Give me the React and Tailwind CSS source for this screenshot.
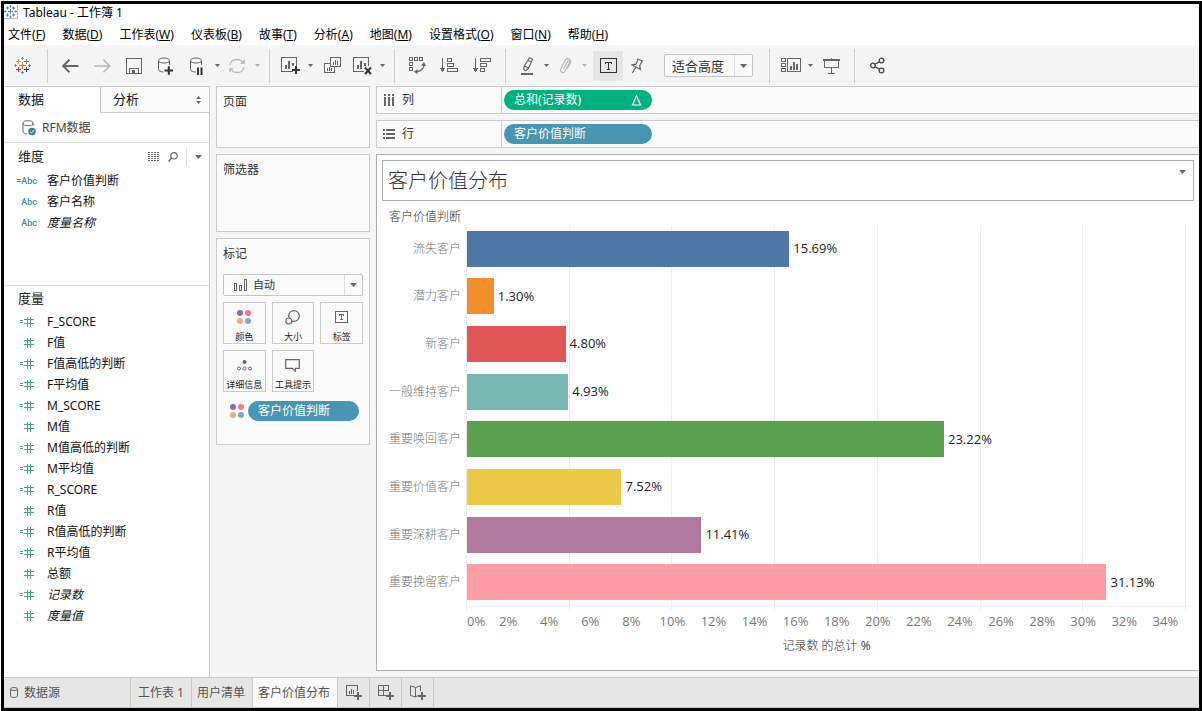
import React from "react";

const UI = "font-['Noto_Sans','Noto_Sans_CJK_SC',sans-serif]";

const bars = [
  { name: "流失客户", value: 15.69, color: "#4e79a7" },
  { name: "潜力客户", value: 1.3, color: "#f28e2b" },
  { name: "新客户", value: 4.8, color: "#e15759" },
  { name: "一般维持客户", value: 4.93, color: "#76b7b2" },
  { name: "重要唤回客户", value: 23.22, color: "#59a14f" },
  { name: "重要价值客户", value: 7.52, color: "#edc948" },
  { name: "重要深耕客户", value: 11.41, color: "#b07aa1" },
  { name: "重要挽留客户", value: 31.13, color: "#ff9da7" },
];
const AXIS_MAX = 35;
const ticks = [2, 4, 6, 8, 10, 12, 14, 16, 18, 20, 22, 24, 26, 28, 30, 32, 34];

const menus = [
  ["文件", "F"],
  ["数据", "D"],
  ["工作表", "W"],
  ["仪表板", "B"],
  ["故事", "T"],
  ["分析", "A"],
  ["地图", "M"],
  ["设置格式", "O"],
  ["窗口", "N"],
  ["帮助", "H"],
];

const dimensions = [
  { name: "客户价值判断", calc: true },
  { name: "客户名称" },
  { name: "度量名称", italic: true },
];

const measures = [
  { name: "F_SCORE", calc: true },
  { name: "F值" },
  { name: "F值高低的判断", calc: true },
  { name: "F平均值", calc: true },
  { name: "M_SCORE", calc: true },
  { name: "M值" },
  { name: "M值高低的判断", calc: true },
  { name: "M平均值", calc: true },
  { name: "R_SCORE", calc: true },
  { name: "R值" },
  { name: "R值高低的判断", calc: true },
  { name: "R平均值", calc: true },
  { name: "总额" },
  { name: "记录数", calc: true, italic: true },
  { name: "度量值", italic: true },
];

function Icon({ w, h, children, className = "", crisp = false }) {
  return (
    <svg
      width={w}
      height={h}
      viewBox={`0 0 ${w} ${h}`}
      fill="none"
      stroke="#666"
      className={`shrink-0 ${className}`}
      shapeRendering={crisp ? "crispEdges" : "auto"}
      aria-hidden="true"
    >
      {children}
    </svg>
  );
}

function Caret({ wide = false, color = "#666" }) {
  return wide ? (
    <Icon w={7} h={4}>
      <path d="M0 0h7L3.5 4z" fill={color} stroke="none" />
    </Icon>
  ) : (
    <Icon w={5} h={3}>
      <path d="M0 0h5L2.5 3z" fill={color} stroke="none" />
    </Icon>
  );
}

function Logo() {
  return (
    <Icon w={17} h={17} crisp>
      <path d="M8.5 5v7M5 8.5h7" stroke="#e8762d" />
      <path d="M4.5 2v5M2 4.5h5" stroke="#eb9c5c" />
      <path d="M12.5 2v5M10 4.5h5" stroke="#5b879b" />
      <path d="M4.5 10v5M2 12.5h5" stroke="#c72035" />
      <path d="M12.5 10v5M10 12.5h5" stroke="#1f457e" />
      <path d="M8.5 0v3M7 1.5h3" stroke="#7099a6" />
      <path d="M8.5 14v3M7 15.5h3" stroke="#7c7fb0" />
      <path d="M1.5 7v3M0 8.5h3" stroke="#7099a6" />
      <path d="M15.5 7v3M14 8.5h3" stroke="#59879b" />
    </Icon>
  );
}

function WindowIcon() {
  return (
    <Icon w={13} h={13}>
      <g stroke="#3f86b0">
        <path d="M6.5 4v5M4 6.5h5M3.500 1.500v3M2 3h3M9.500 1.500v3M8 3h3M3.500 8.500v3M2 10h3M9.500 8.500v3M8 10h3" />
        <path d="M6.500 0v2.500M6.500 10.500V13M0 6.500h2.500M10.500 6.500H13M5.500 1.200h2M5.500 11.800h2M1.200 5.500v2M11.800 5.500v2" />
      </g>
    </Icon>
  );
}

function Cylinder() {
  return (
    <>
      <ellipse cx="6" cy="3.5" rx="5.5" ry="2.5" />
      <path d="M0.5 3.5v9c0 1.4 2 2.3 5 2.5M11.5 3.5v4.5" />
    </>
  );
}

function Dots() {
  return (
    <Icon w={14} h={14}>
      <g stroke="none">
        <circle cx="3" cy="3" r="3" fill="#8a7099" />
        <circle cx="11" cy="3" r="3" fill="#fb7482" />
        <circle cx="3" cy="11" r="3" fill="#f2a77c" />
        <circle cx="11" cy="11" r="3" fill="#85a6cc" />
      </g>
    </Icon>
  );
}

function Tool({ label, width = "w-8", className = "", children }) {
  return (
    <button
      type="button"
      aria-label={label}
      className={`flex h-[30px] shrink-0 items-center justify-center ${width} ${className}`}
    >
      {children}
    </button>
  );
}

function Sep() {
  return <div className="mx-1.5 h-[34px] w-px shrink-0 bg-[#d0d0d0]" />;
}

function Toolbar() {
  return (
    <div className="flex h-[41px] items-center bg-[#f5f5f5]">
      <Tool label="Tableau" width="w-[37px]">
        <Logo />
      </Tool>
      <Sep />
      <Tool label="撤消">
        <Icon w={17} h={14}>
          <path d="M16.5 7H1.5M7.5 0.8L1.2 7l6.3 6.2" strokeWidth="1.9" />
        </Icon>
      </Tool>
      <Tool label="重做">
        <Icon w={17} h={14}>
          <path d="M0.5 7h15M9.5 0.8L15.8 7l-6.3 6.2" strokeWidth="1.5" stroke="#b4b4b4" />
        </Icon>
      </Tool>
      <Tool label="保存">
        <Icon w={16} h={16} crisp>
          <path d="M0.5 0.5h15v15h-15zM3.5 15v-5h9v5" />
          <path d="M6 12h3v4H6z" fill="#666" stroke="none" />
        </Icon>
      </Tool>
      <Tool label="新建数据源">
        <Icon w={16} h={18}>
          <Cylinder />
          <path d="M6.500 13.5h8.5M10.800 9.3v8.5" stroke="#333" strokeWidth="2" />
        </Icon>
      </Tool>
      <Tool label="暂停自动更新" width="w-[29px]">
        <Icon w={14} h={18}>
          <Cylinder />
          <path d="M8 10.5v7.5M11.5 10.5v7.5" stroke="#333" strokeWidth="2" />
        </Icon>
      </Tool>
      <Tool label="更新选项" width="w-3">
        <Caret />
      </Tool>
      <Tool label="运行更新" width="w-7">
        <Icon w={18} h={16}>
          <g stroke="#bbb" strokeWidth="1.3">
            <path d="M2 7C2.6 3.4 5.5 1.5 8.8 1.5c3.2 0 5.4 1.7 6.4 4.3M16 9c-.6 3.6-3.5 5.5-6.8 5.5-3.2 0-5.4-1.7-6.4-4.3" />
            <path d="M12 5.8h4.8l.2-4.3zM6 10.2H1.2L1 14.5z" fill="#bbb" stroke="none" />
          </g>
        </Icon>
      </Tool>
      <Tool label="运行选项" width="w-3">
        <Caret color="#b4b4b4" />
      </Tool>
      <Sep />
      <Tool label="新建工作表" width="w-7">
        <Icon w={19} h={18} crisp>
          <path d="M12 14.5H0.5v-14h15v8" />
          <path d="M4.5 12V8M8 12V4M11.5 9V6" strokeWidth="2" />
          <path d="M11 13h8M15 9v8" stroke="#333" strokeWidth="2" />
        </Icon>
      </Tool>
      <Tool label="工作表选项" width="w-3">
        <Caret />
      </Tool>
      <Tool label="复制工作表">
        <Icon w={17} h={17} crisp>
          <path d="M6.5 0.5h10v9h-10zM6.5 6.5h-6v9h10V10" />
          <path d="M9.5 7.5V5M11.5 7.5V3M13.5 7.5V4M3.5 13.5V11M5.5 13.5V10M7.5 13.5V11" />
        </Icon>
      </Tool>
      <Tool label="清除工作表" width="w-7">
        <Icon w={19} h={18}>
          <g shapeRendering="crispEdges">
            <path d="M11 14.5H0.5v-14h15v8" />
            <path d="M4.5 12V8M8 12V4M11.5 9V6" strokeWidth="2" />
          </g>
          <path d="M12 10.5l6 6.5M18 10.5L12 17" stroke="#333" strokeWidth="2" />
        </Icon>
      </Tool>
      <Tool label="清除选项" width="w-3">
        <Caret />
      </Tool>
      <Sep />
      <Tool label="交换行和列">
        <Icon w={17} h={17}>
          <g shapeRendering="crispEdges">
            <path d="M0.5 0.5h3v3h-3zM5.5 0.5h3v3h-3zM10.5 0.5h3v3h-3zM0.5 5.5h3v3h-3zM0.5 10.5h3v3h-3z" />
          </g>
          <path d="M15 7c.3 4-2.6 7.5-8 7.8" strokeWidth="1.3" />
          <path d="M12 8.5L15 5l2 4zM8.5 12L5 14.8 8.5 17z" fill="#666" stroke="none" />
        </Icon>
      </Tool>
      <Tool label="升序排序">
        <Icon w={18} h={15} crisp>
          <path d="M2.5 0v11" />
          <path d="M0 10h5L2.5 14.5z" fill="#666" stroke="none" />
          <path d="M7.5 0.5h4v3h-4zM7.5 5.5h6v3h-6zM7.5 10.5h10v3h-10z" />
        </Icon>
      </Tool>
      <Tool label="降序排序" width="w-[34px]">
        <Icon w={18} h={15} crisp>
          <path d="M2.5 0v11" />
          <path d="M0 10h5L2.5 14.5z" fill="#666" stroke="none" />
          <path d="M7.5 0.5h10v3h-10zM7.5 5.5h6v3h-6zM7.5 10.5h4v3h-4z" />
        </Icon>
      </Tool>
      <Sep />
      <Tool label="突出显示" width="w-[30px]">
        <Icon w={13} h={18}>
          <path
            d="M8.5 0.8l3 1.5-4 9-2.8 2.4-2-1.2.6-3.5zM3.5 9l4 2.2M7 3.5l3.5 1.8"
            strokeWidth="1.2"
          />
          <path d="M0 17h12" strokeWidth="2" />
        </Icon>
      </Tool>
      <Tool label="突出显示选项" width="w-2">
        <Caret />
      </Tool>
      <Tool label="组成员" width="w-[30px]">
        <Icon w={13} h={16}>
          <path
            d="M4.5 11l4-7.2c.9-1.5 2.7-.7 2 .9L6 13.3c-1.3 2.3-5 1.2-4.5-1.7.1-.8 4.5-9 5.3-9.9 1.9-2 5.7-.5 4.8 2.8L8.5 10.5"
            stroke="#b8b8b8"
            strokeWidth="1.2"
          />
        </Icon>
      </Tool>
      <Tool label="组选项" width="w-2">
        <Caret color="#b4b4b4" />
      </Tool>
      <Tool label="显示标记标签" width="w-[30px]" className="ml-[5px] bg-[#e6e6e6]">
        <Icon w={17} h={15} crisp>
          <path d="M0.5 0.5h16v14h-16z" stroke="#333" />
          <path d="M5.5 6V4.5h6V6M8.5 4.5v7M7 11.5h3" stroke="#333" />
        </Icon>
      </Tool>
      <Tool label="固定轴" width="w-7">
        <Icon w={13} h={16}>
          <path
            d="M6 0.8l6 2.5M7 1.5L5 6.2 1 7l8.5 4.3-.8-3.5L11 3.2M4.8 9.3L1.2 15"
            strokeWidth="1.2"
          />
        </Icon>
      </Tool>
      <div className="relative mr-2.5 ml-[13px] h-[23px] w-[89px] shrink-0">
        <select
          aria-label="适合"
          className="h-full w-full appearance-none rounded-xs border border-[#c4c4c4] bg-[#fafafa] pl-[7px] text-[13px] leading-5 text-[#333]"
        >
          <option>适合高度</option>
          <option>标准</option>
          <option>适合宽度</option>
          <option>整个视图</option>
        </select>
        <span className="pointer-events-none absolute inset-y-px right-px flex w-[18px] items-center justify-center border-l border-[#ddd]">
          <Caret wide />
        </span>
      </div>
      <Sep />
      <Tool label="显示/隐藏卡" width="w-[30px]">
        <Icon w={20} h={15} crisp>
          <path d="M0.5 0.5h4v3h-4zM0.5 5.5h4v3h-4zM0.5 10.5h4v3h-4zM6.5 0.5h13v13h-13z" />
          <path d="M10 12V8M13 12V4M16 12V6" strokeWidth="2" />
        </Icon>
      </Tool>
      <Tool label="卡选项" width="w-2">
        <Caret />
      </Tool>
      <Tool label="演示模式" width="w-[34px]">
        <Icon w={17} h={16} crisp>
          <path d="M0 2h17" strokeWidth="2" />
          <path d="M1.5 2v7.5h14V2M8.5 10v5M5 15.5h7M8.5 0v1" />
        </Icon>
      </Tool>
      <Sep />
      <Tool label="共享">
        <Icon w={15} h={17}>
          <g strokeWidth="1.3" stroke="#444">
            <circle cx="3" cy="8.500" r="2.300" />
            <circle cx="11.5" cy="3.500" r="2.300" />
            <circle cx="11.5" cy="13.500" r="2.300" />
            <path d="M5 7.300l4.500-2.600M5 9.700l4.500 2.600" />
          </g>
        </Icon>
      </Tool>
    </div>
  );
}

function Field({ icon, name, italic }) {
  return (
    <li className="h-[21px]">
      <button type="button" className="flex h-full w-full items-center gap-2.5 pl-3.5 text-left">
        <span className="flex w-[19px] justify-end">{icon}</span>
        <span className={italic ? "italic" : ""}>{name}</span>
      </button>
    </li>
  );
}

function HashIcon({ calc }) {
  return (
    <Icon w={14} h={11} crisp className="mr-[3px]">
      <path d="M4 3.5h10M4 7.5h10M7.5 0.5v10M10.5 0.5v10" stroke="#46a17f" />
      {calc && <path d="M0 4.5h3M0 6.5h3" stroke="#46a17f" />}
    </Icon>
  );
}

function Sidebar() {
  return (
    <aside className="flex w-[206px] shrink-0 flex-col border-r border-[#ccc] bg-white">
      <div className="flex h-[27px] border-t border-[#ccc] text-[13px] text-[#111]">
        <button type="button" className="w-24 pl-3.5 text-left">
          数据
        </button>
        <button
          type="button"
          className="flex flex-1 items-center justify-between border-b border-l border-[#ccc] bg-[#fafafa] pr-2 pl-3"
        >
          分析
          <Icon w={5} h={8}>
            <path d="M0 3h5L2.5 0zM0 5h5L2.5 8z" fill="#666" stroke="none" />
          </Icon>
        </button>
      </div>
      <button
        type="button"
        className="flex h-[30px] items-center gap-1.5 border-b border-[#ddd] pl-[18px] text-[#444]"
      >
        <Icon w={14} h={16}>
          <ellipse cx="6" cy="3.2" rx="5" ry="2.5" />
          <path d="M1 3.2v8.3c0 1.4 1.5 2.3 4 2.5M11 3.2V6" />
          <circle cx="10" cy="11.5" r="3.800" fill="#3b83a3" stroke="none" />
          <path d="M8.200 11.600l1.300 1.300 2.300-2.600" stroke="#fff" />
        </Icon>
        RFM数据
      </button>
      <section className="h-[143px] border-b border-[#ddd]">
        <div className="flex h-[27px] items-center pr-[7px] pl-3.5">
          <h2 className="flex-1 text-[13px] text-[#222]">维度</h2>
          <button type="button" aria-label="查看数据">
            <Icon w={12} h={9} crisp>
              <path
                d="M0 0.5h12M0 2.5h12M0 4.5h12M0 6.5h12M0 8.5h12"
                strokeDasharray="2 1"
              />
            </Icon>
          </button>
          <button type="button" aria-label="查找字段" className="ml-2">
            <Icon w={10} h={10}>
              <circle cx="6" cy="3.8" r="3.2" strokeWidth="1.2" />
              <path d="M3.5 6L0.5 9.5" strokeWidth="1.5" />
            </Icon>
          </button>
          <span className="mx-2 h-[18px] w-px bg-[#ddd]" />
          <button type="button" aria-label="维度菜单">
            <Caret wide />
          </button>
        </div>
        <ul className="text-[#111]">
          {dimensions.map((d) => (
            <Field
              key={d.name}
              name={d.name}
              italic={d.italic}
              icon={
                <span className="font-['Roboto',sans-serif] text-[9px] font-medium text-[#4585a0]">
                  {d.calc ? "=Abc" : "Abc"}
                </span>
              }
            />
          ))}
        </ul>
      </section>
      <section>
        <h2 className="h-[25px] pl-3.5 text-[13px] leading-6 text-[#222]">度量</h2>
        <ul className="text-[#111]">
          {measures.map((m) => (
            <Field key={m.name} name={m.name} italic={m.italic} icon={<HashIcon calc={m.calc} />} />
          ))}
        </ul>
      </section>
    </aside>
  );
}

function MarkButton({ label, children }) {
  return (
    <button
      type="button"
      className="flex h-[42px] flex-col items-center border border-[#ccc] bg-[#fafafa] text-[9px] leading-3 whitespace-nowrap text-[#222]"
    >
      <span className="flex h-7 items-center justify-center">{children}</span>
      {label}
    </button>
  );
}

function Pill({ children, className }) {
  return (
    <button
      type="button"
      className={`flex h-5 items-center justify-between rounded-full px-2.5 text-white ${className}`}
    >
      {children}
    </button>
  );
}

function Cards() {
  const card = "border border-[#ccc] bg-[#fafafa] px-1.5 pt-[5px]";
  return (
    <div className="flex w-[154px] shrink-0 flex-col gap-1.5 text-[#333]">
      <section className={`${card} h-[62px]`}>
        <h2 className="leading-5">页面</h2>
      </section>
      <section className={`${card} h-[78px]`}>
        <h2 className="leading-5">筛选器</h2>
      </section>
      <section className={`${card} h-[207px]`}>
        <h2 className="leading-5">标记</h2>
        <div className="relative mt-2.5 h-[22px]">
          <select
            aria-label="标记类型"
            className="h-full w-full appearance-none rounded-xs border border-[#c4c4c4] bg-[#fafafa] pl-[29px] text-[11px] text-[#333]"
          >
            <option>自动</option>
            <option>条形图</option>
            <option>线</option>
          </select>
          <span className="pointer-events-none absolute inset-y-0 left-[11px] flex items-center">
            <Icon w={13} h={12} crisp>
              <path d="M0.5 4.5h2v7h-2zM5.5 6.5h2v5h-2zM10.5 0.5h2v11h-2z" />
            </Icon>
          </span>
          <span className="pointer-events-none absolute inset-y-px right-px flex w-[18px] items-center justify-center border-l border-[#ddd]">
            <Caret wide />
          </span>
        </div>
        <div className="mt-1.5 grid grid-cols-3 gap-1.5">
          <MarkButton label="颜色">
            <Dots />
          </MarkButton>
          <MarkButton label="大小">
            <Icon w={16} h={15}>
              <circle cx="9" cy="6" r="5.4" strokeWidth="1.2" />
              <circle cx="3.8" cy="11" r="3" strokeWidth="1.2" fill="#fafafa" />
            </Icon>
          </MarkButton>
          <MarkButton label="标签">
            <Icon w={13} h={12} crisp>
              <path d="M0.5 0.5h12v11h-12zM4.5 5V3.5h4V5M6.5 3.5v5M5 8.5h3" />
            </Icon>
          </MarkButton>
          <MarkButton label="详细信息">
            <Icon w={15} h={11}>
              <circle cx="7.5" cy="2" r="2" fill="#666" stroke="none" />
              <circle cx="2" cy="8.5" r="1.5" />
              <circle cx="7.5" cy="8.5" r="1.5" />
              <circle cx="13" cy="8.5" r="1.5" />
            </Icon>
          </MarkButton>
          <MarkButton label="工具提示">
            <Icon w={15} h={13}>
              <path d="M0.7 0.7h13.6v8.6h-4v3L7.5 9.3H0.7z" strokeWidth="1.2" />
            </Icon>
          </MarkButton>
        </div>
        <div className="mt-[9px] flex items-center gap-1 pr-1 pl-[7px]">
          <Dots />
          <Pill className="flex-1 bg-[#4996b2]">客户价值判断</Pill>
        </div>
      </section>
    </div>
  );
}

function Shelf({ icon, label, children }) {
  return (
    <div className="flex h-7 border-y border-l border-[#ccc] bg-[#fafafa]">
      <div className="flex w-[125px] shrink-0 items-center gap-[7px] border-r border-[#ccc] pl-1.5 text-[#333]">
        {icon}
        {label}
      </div>
      <div className="flex items-center pl-0.5">{children}</div>
    </div>
  );
}

function Chart() {
  return (
    <div className="flex flex-1 flex-col pt-1.5 pr-[13px] font-['Open_Sans','Noto_Sans_CJK_SC',sans-serif]">
      <h3 className="h-[18px] pl-3 leading-5 font-light text-[#333]">客户价值判断</h3>
      <div className="grid flex-1 [&>*]:col-start-1 [&>*]:row-start-1">
        <div className="flex pl-[89px]">
          <div className="grid flex-1 grid-cols-7 border-l border-[#eee]">
            {[5, 10, 15, 20, 25, 30, 35].map((v) => (
              <span key={v} className="border-r border-[#eee]" />
            ))}
          </div>
        </div>
        <div className="-mr-1 mb-[3px] ml-[89px] border-b border-[#f2f2f2]" />
        <div className="mb-1 flex flex-col">
          {bars.map((b) => (
            <div key={b.name} className="flex flex-1 items-center">
              <div className="w-[90px] shrink-0 pr-1.5 text-right font-light text-[#777]">{b.name}</div>
              <div className="flex flex-1 items-center">
                <div
                  className="h-9 shrink-0"
                  style={{ width: `${(b.value / AXIS_MAX) * 100}%`, backgroundColor: b.color }}
                />
                <span className="pl-1 text-[13px] text-[#222]">{b.value.toFixed(2)}%</span>
              </div>
            </div>
          ))}
        </div>
      </div>
      <div className="flex h-6 items-center pl-[90px] text-[13px] text-[#777]">
        <span className="min-w-0 flex-1">0%</span>
        {ticks.map((t) => (
          <span key={t} className="min-w-0 flex-[2] text-center">
            {t}%
          </span>
        ))}
      </div>
      <div className="h-9 pl-[90px] text-center leading-6 font-light text-[#333]">
        记录数 的总计 <span className="font-normal">%</span>
      </div>
    </div>
  );
}

function Plus() {
  return <path d="M8 11h8M12 7v8" strokeWidth="2" />;
}

function SheetTabs() {
  const tab = "flex shrink-0 items-center border-r border-[#c8c8c8]";
  return (
    <footer className="flex h-[31px] border-y border-[#c8c8c8] bg-[#e6e6e6] text-[#555]">
      <button type="button" className={`${tab} w-[127px] gap-1.5 pl-1.5`}>
        <Icon w={8} h={11}>
          <ellipse cx="4" cy="2" rx="3.5" ry="1.5" />
          <path d="M0.5 2v7c0 .8 1.5 1.5 3.5 1.5S7.5 9.8 7.5 9V2" />
        </Icon>
        数据源
      </button>
      <button type="button" className={`${tab} w-[61px] justify-center`}>
        工作表 1
      </button>
      <button type="button" className={`${tab} w-[61px] pl-[5px]`}>
        用户清单
      </button>
      <button type="button" className={`${tab} w-[85px] bg-[#fafafa] pl-[5px]`}>
        客户价值分布
      </button>
      <button type="button" aria-label="新建工作表" className={`${tab} w-8 justify-center`}>
        <Icon w={16} h={15} crisp>
          <path d="M8 10.5H0.5v-10h11V6M3.5 8.5V6M5.5 8.5V4M7.5 8.5V5" />
          <Plus />
        </Icon>
      </button>
      <button type="button" aria-label="新建仪表板" className={`${tab} w-8 justify-center`}>
        <Icon w={16} h={15} crisp>
          <path d="M8 10.5H0.5v-10h10V6M0.5 5.5h10M5.5 0.5v10" />
          <Plus />
        </Icon>
      </button>
      <button type="button" aria-label="新建故事" className={`${tab} w-8 justify-center`}>
        <Icon w={16} h={15}>
          <path d="M8 10.5L5.5 12 0.5 10.5V0.8L5.5 2.5l5-1.7V6M5.5 2.5V12" />
          <g shapeRendering="crispEdges">
            <Plus />
          </g>
        </Icon>
      </button>
    </footer>
  );
}

export default function App() {
  return (
    <div lang="zh-CN" className={`flex min-h-screen bg-white pt-px pl-px text-xs ${UI}`}>
      <div className="flex min-w-0 flex-1 flex-col overflow-hidden border-[3px] border-black">
        <header className="flex h-[18px] items-center gap-[5px] text-black">
          <span className="flex h-[15px] w-[14px] shrink-0 items-center justify-center self-start border-r border-b border-[#bbb]">
            <WindowIcon />
          </span>
          <span>Tableau - 工作簿 1</span>
        </header>
        <nav className="flex h-[23px] items-center gap-[17px] pt-0.5 pl-1 whitespace-nowrap text-black">
          {menus.map(([label, key]) => (
            <button type="button" key={key}>
              {label}(<span className="underline">{key}</span>)
            </button>
          ))}
        </nav>
        <Toolbar />
        <main className="flex flex-1 gap-1.5 bg-[#f5f5f5]">
          <Sidebar />
          <Cards />
          <div className="flex min-w-0 flex-1 flex-col gap-1.5">
            <Shelf
              label="列"
              icon={
                <Icon w={12} h={12} crisp>
                  <path d="M2 0v2M2 3v9M6 0v2M6 3v9M10 0v2M10 3v9" strokeWidth="2" />
                </Icon>
              }
            >
              <Pill className="w-[148px] bg-[#00b180]">
                总和(记录数)
                <Icon w={11} h={11}>
                  <path d="M5.5 1L9.5 10h-8z" stroke="#fff" strokeWidth="1.2" />
                </Icon>
              </Pill>
            </Shelf>
            <Shelf
              label="行"
              icon={
                <Icon w={12} h={10} crisp>
                  <path d="M0 1h2M3 1h9M0 5h2M3 5h9M0 9h2M3 9h9" strokeWidth="2" />
                </Icon>
              }
            >
              <Pill className="w-[148px] bg-[#4996b2]">客户价值判断</Pill>
            </Shelf>
            <section className="mb-1.5 flex flex-1 flex-col border-y border-l border-[#b0b0b0] bg-white">
              <div className="mx-[5px] mt-[5px] flex h-[41px] items-start justify-between border border-[#b0b0b0] pr-[7px] pl-[5px]">
                <h1 className="text-xl leading-10 font-light text-[#333]">客户价值分布</h1>
                <button type="button" aria-label="标题菜单" className="pt-[9px]">
                  <Caret wide />
                </button>
              </div>
              <Chart />
            </section>
          </div>
        </main>
        <SheetTabs />
      </div>
    </div>
  );
}
